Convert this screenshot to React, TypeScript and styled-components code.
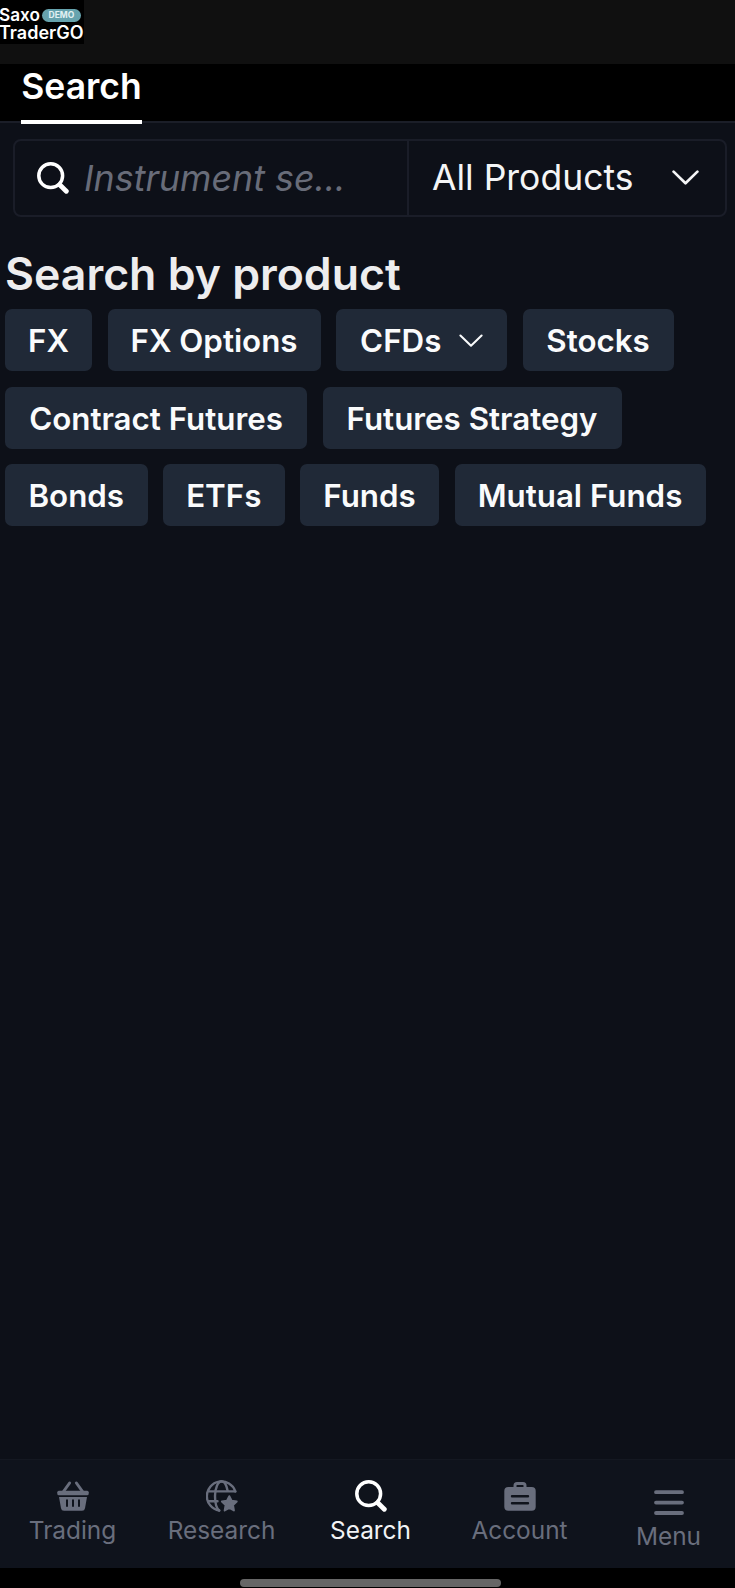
import React from 'react';
import styled, { createGlobalStyle, css } from 'styled-components';

const GlobalStyle = createGlobalStyle`
  * { box-sizing: border-box; }
  body {
    margin: 0;
    background: #0d1018;
    color: #fff;
    font-family: Inter, "Liberation Sans", sans-serif;
  }
`;

const Screen = styled.div`
  display: flex;
  flex-direction: column;
  width: 735px;
  height: 1588px;
  background: #0d1018;
  overflow: hidden;
`;

const StatusBar = styled.header`
  height: 64px;
  background: #101010;
`;

const Brand = styled.div`
  width: 84px;
  height: 44px;
  padding-top: 6px;
  background: #000;
  font-size: 18px;
  font-weight: 600;
  line-height: 18px;
  white-space: nowrap;
`;

const BrandRow = styled.div`
  display: flex;
  align-items: center;
  gap: 2px;
  margin-left: -1px;
  height: 18px;
`;

const BrandName = styled.span`
  font-size: 17.2px;
`;

const DemoBadge = styled.span`
  display: flex;
  align-items: center;
  justify-content: center;
  width: 39px;
  height: 13px;
  border-radius: 7px;
  background: #66a3ae;
  color: #e2f1f3;
  font-size: 8.5px;
  font-weight: 700;
  line-height: 13px;
`;

const TabBar = styled.nav`
  display: flex;
  height: 60px;
  padding-left: 21px;
  background: linear-gradient(#000 57px, #1b1e28 57px, #1b1e28 59px, #0d1018 59px);
`;

const Tab = styled.button`
  width: 121px;
  height: 60px;
  padding: 0 0 10px;
  border: 0;
  border-bottom: 4px solid #fff;
  background: none;
  color: #fff;
  font: 600 35.5px/44px Inter, sans-serif;
  white-space: nowrap;
`;

const SearchBox = styled.div`
  display: flex;
  height: 78px;
  margin: 15px 8px 0 13px;
  border: 2px solid #1a1d28;
  border-radius: 8px;
`;

const SearchField = styled.div`
  display: flex;
  align-items: center;
  width: 394px;
  padding-left: 22px;
  gap: 15px;
  border-right: 2px solid #1a1d28;
`;

const Placeholder = styled.span`
  padding-bottom: 1px;
  color: #686c79;
  font-size: 35.8px;
  font-style: italic;
  line-height: 44px;
  white-space: nowrap;
`;

const ProductSelect = styled.div`
  display: flex;
  flex: 1;
  align-items: center;
  justify-content: space-between;
  padding: 0 26px 0 23px;
  color: #f4f5f6;
  font-size: 35.5px;
  line-height: 44px;
  white-space: nowrap;
`;

const Title = styled.h1`
  margin: 31px 0 0 5px;
  color: #ededee;
  font-size: 44.6px;
  font-weight: 600;
  line-height: 52px;
  white-space: nowrap;
`;

const ChipList = styled.div`
  display: flex;
  flex-direction: column;
  gap: 15.5px;
  padding: 9px 0 0 5px;
`;

const ChipRow = styled.div`
  display: flex;
  gap: 15.5px;
`;

const Chip = styled.button<{ $width: number }>`
  display: flex;
  align-items: center;
  justify-content: center;
  gap: 17.5px;
  width: ${p => p.$width}px;
  height: 62px;
  padding: 2px 0 0;
  border: 0;
  border-radius: 7px;
  background: #202937;
  color: #fafbfc;
  font: 600 31.3px/40px Inter, sans-serif;
  white-space: nowrap;
`;

const BottomNav = styled.nav`
  display: flex;
  height: 109px;
  margin-top: auto;
  padding-left: 6px;
  border-top: 1px solid #141821;
  background: #0f131c;
  justify-content: center;
`;

const NavItem = styled.a<{ $active?: boolean; $low?: boolean }>`
  display: flex;
  flex-direction: column;
  align-items: center;
  flex: 0 0 149px;
  gap: ${p => (p.$low ? 1 : 2)}px;
  padding-top: ${p => (p.$low ? 27 : 20)}px;
  color: ${p => (p.$active ? '#f2f3f5' : '#696e7d')};
  font-size: 24.4px;
  line-height: 32px;
  ${p => p.$active && css`svg { color: #fff; }`}

  svg { display: block; }
`;

const HomeArea = styled.footer`
  display: flex;
  justify-content: center;
  height: 20px;
  padding: 11px 0 0 6px;
  background: #000;
`;

const HomePill = styled.div`
  width: 261px;
  height: 8px;
  border-radius: 4px;
  background: #666;
`;

const SearchIcon = () => (
  <svg width="32" height="32" viewBox="0 0 32 32" fill="none" stroke="currentColor" strokeLinecap="round">
    <circle cx="13.7" cy="13.7" r="11.9" strokeWidth="3.5" />
    <path d="M22.7 22.7 29.3 29.3" strokeWidth="4.8" />
  </svg>
);

const Chevron = ({ width, stroke }: { width: number; stroke: number }) => (
  <svg width={width} height={width * 0.56} viewBox="0 0 26 14.6" fill="none" stroke="currentColor" strokeWidth={stroke} strokeLinecap="round" strokeLinejoin="round">
    <path d="M1.5 1.6 13 12.8 24.5 1.6" />
  </svg>
);

const BasketIcon = () => (
  <svg width="32" height="32" viewBox="0 0 32 32" fill="currentColor">
    <path d="M6.5 11.5 12.6 3M25.5 11.5 19.4 3" stroke="currentColor" strokeWidth="3" strokeLinecap="round" />
    <rect x="0.3" y="10.7" width="31.4" height="4.6" rx="1.5" />
    <path fillRule="evenodd" d="M2 17H30L28 28.3Q27.6 30.8 25 30.8H7Q4.4 30.8 4 28.3ZM9 19.6V26.8H11V19.6ZM15 19.6V26.8H17V19.6ZM21 19.6V26.8H23V19.6Z" />
  </svg>
);

const GlobeStarIcon = () => (
  <svg width="32" height="32" viewBox="0 0 32 32" fill="none" stroke="currentColor" strokeWidth="2.4" strokeLinecap="round">
    <path d="M29.3 11.4A14.6 14.6 0 1 0 13.2 30.5" />
    <path d="M2.2 11.4H29.3M2.4 21.3H11.5" />
    <path d="M21.6 10.8C20.4 4.7 18 1.3 15.7 1.3 12 1.3 9 8 9 16 9 23 10.9 28.6 13.2 30.5" />
    <path fill="currentColor" strokeWidth="2" strokeLinejoin="round" d="M23.3 16.2 25.6 20.8 30.7 21.5 27 25.1 27.9 30.4 23.3 27.9 18.7 30.4 19.6 25.1 15.9 21.5 21 20.8Z" />
  </svg>
);

const CaseIcon = () => (
  <svg width="32" height="32" viewBox="0 0 32 32" fill="none">
    <path d="M11 7.5V5.5Q11 3.4 13 3.4H19Q21 3.4 21 5.5V7.5" stroke="currentColor" strokeWidth="3" />
    <rect x="0.3" y="7" width="31.4" height="23.8" rx="4" fill="currentColor" />
    <path d="M8 16.2H24M8 23.2H24" stroke="#0f131c" strokeWidth="2.4" strokeLinecap="round" />
  </svg>
);

const MenuIcon = () => (
  <svg width="32" height="32" viewBox="0 0 32 32" stroke="currentColor" strokeWidth="3.8" strokeLinecap="round">
    <path d="M3 5.2H29M3 15.6H29M3 26H29" />
  </svg>
);

const chipRows: { label: string; width: number; menu?: boolean }[][] = [
  [
    { label: 'FX', width: 87 },
    { label: 'FX Options', width: 213 },
    { label: 'CFDs', width: 171, menu: true },
    { label: 'Stocks', width: 151 },
  ],
  [
    { label: 'Contract Futures', width: 302 },
    { label: 'Futures Strategy', width: 299 },
  ],
  [
    { label: 'Bonds', width: 142.5 },
    { label: 'ETFs', width: 121.5 },
    { label: 'Funds', width: 139 },
    { label: 'Mutual Funds', width: 251 },
  ],
];

export default function App() {
  return (
    <>
      <GlobalStyle />
      <Screen>
        <StatusBar>
          <Brand>
            <BrandRow><BrandName>Saxo</BrandName><DemoBadge>DEMO</DemoBadge></BrandRow>
            <BrandRow>TraderGO</BrandRow>
          </Brand>
        </StatusBar>
        <TabBar><Tab>Search</Tab></TabBar>
        <SearchBox>
          <SearchField>
            <SearchIcon />
            <Placeholder>Instrument se...</Placeholder>
          </SearchField>
          <ProductSelect>
            <span>All Products</span>
            <Chevron width={27} stroke={2.6} />
          </ProductSelect>
        </SearchBox>
        <Title>Search by product</Title>
        <ChipList>
          {chipRows.map(row => (
            <ChipRow key={row[0].label}>
              {row.map(({ label, width, menu }) => (
                <Chip key={label} $width={width}>
                  {label}
                  {menu && <Chevron width={24} stroke={2.2} />}
                </Chip>
              ))}
            </ChipRow>
          ))}
        </ChipList>
        <BottomNav>
          <NavItem><BasketIcon />Trading</NavItem>
          <NavItem><GlobeStarIcon />Research</NavItem>
          <NavItem $active><SearchIcon />Search</NavItem>
          <NavItem><CaseIcon />Account</NavItem>
          <NavItem $low><MenuIcon />Menu</NavItem>
        </BottomNav>
        <HomeArea><HomePill /></HomeArea>
      </Screen>
    </>
  );
}
